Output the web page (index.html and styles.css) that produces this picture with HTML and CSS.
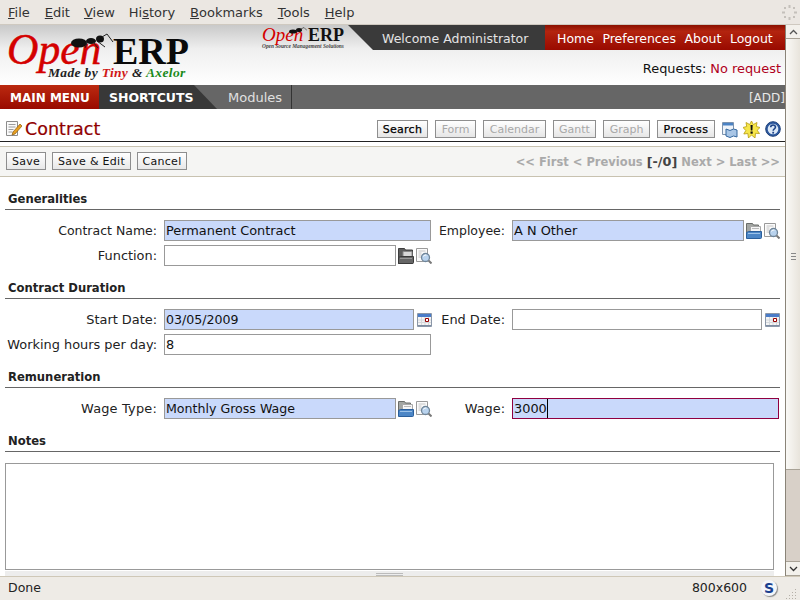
FILE: index.html
```html
<!DOCTYPE html>
<html lang="en">
<head>
<meta charset="utf-8">
<title>Contract - OpenERP</title>
<link rel="stylesheet" href="styles.css">
</head>
<body>
<svg class="defs" width="0" height="0" aria-hidden="true">
  <defs>
    <g id="i-search">
      <path d="M.5 .5h11v13H.5z" fill="#fbfbfb" stroke="#9a9a9a"/>
      <path d="M2.500 3h7M2.500 5h3M2.500 7h3M2.500 9h3" stroke="#c4c4c4"/>
      <circle cx="9.500" cy="9.500" r="4" fill="#b9d3ee" stroke="#6f8599" stroke-width="1.300"/>
      <path d="M7.500 8.500a2.500 2.500 0 0 1 3-1.500" stroke="#fff" fill="none"/>
      <path d="M12.500 12.500l3 3" stroke="#7a7a7a" stroke-width="2"/>
    </g>
    <g id="i-folder">
      <path d="M.5 .5h6l1 1.500h5v8H.5z" fill="#a3a6a3" stroke="#6a6d6a"/>
      <path d="M4.500 3.500h10v6h-10z" fill="#f6f6f6" stroke="#a8a8a8"/>
      <path d="M6 5.500h7" stroke="#bbb"/>
      <path d="M.5 9.500l2-1h13v6a1 1 0 0 1-1 1H.5z" fill="#4c86c6" stroke="#2a5f9c"/>
      <path d="M2 10.500h12" stroke="#9cc2e8"/>
    </g>
    <g id="i-folder-dark">
      <path d="M.5 .5h6l1 1.500h7v13.500H.5z" fill="#5e5e5e" stroke="#3f3f3f"/>
      <path d="M5 3.500h9v5H5z" fill="#d8d8d8" stroke="#888"/>
      <path d="M.5 9.500l2-1h13v6a1 1 0 0 1-1 1H.5z" fill="#666" stroke="#3a3a3a"/>
      <path d="M2 10.500h12" stroke="#999"/>
    </g>
    <g id="i-cal">
      <path d="M.5 1.500h14v13H.5z" fill="#f4f4f4" stroke="#8b97a8"/>
      <path d="M1 2h13v3H1z" fill="#4a7cc8"/>
      <path d="M1 13h13v1H1z" fill="#7f8ea3"/>
      <path d="M4.500 5v8M8 5v8M11.500 5v8M1 8h13M1 10.500h13" stroke="#d5d8dc"/>
      <path d="M8.500 6.500h3v3h-3z" fill="#fff" stroke="#900"/>
    </g>
  </defs>
</svg>
<div class="window">
  <nav class="menubar">
    <span class="m m-file"><u>F</u>ile</span>
    <span class="m m-edit"><u>E</u>dit</span>
    <span class="m m-view"><u>V</u>iew</span>
    <span class="m m-hist">Hi<u>s</u>tory</span>
    <span class="m m-book"><u>B</u>ookmarks</span>
    <span class="m m-tools"><u>T</u>ools</span>
    <span class="m"><u>H</u>elp</span>
    <svg class="spinner" width="15" height="15" viewBox="0 0 15 15">
      <g fill="#c4c0ba">
        <rect x="6.500" y="0" width="2" height="3"/><rect x="6.500" y="12" width="2" height="3"/>
        <rect x="0" y="6.500" width="3" height="2"/><rect x="12" y="6.500" width="3" height="2"/>
        <rect x="2" y="2" width="2" height="2"/><rect x="11" y="2" width="2" height="2"/>
        <rect x="2" y="11" width="2" height="2"/><rect x="11" y="11" width="2" height="2"/>
      </g>
    </svg>
  </nav>
  <div class="viewport">
    <main class="page">
      <header class="header">
        <div class="logo">
          <div class="logo-main">
            <span class="logo-open">Open</span><span class="logo-erp">ERP</span>
            <svg class="ant" width="44" height="18" viewBox="0 0 44 18">
              <ellipse cx="8" cy="10" rx="8" ry="4.500" fill="#111"/>
              <ellipse cx="20" cy="8" rx="5" ry="3" fill="#111"/>
              <ellipse cx="29" cy="6" rx="4" ry="3.500" fill="#111"/>
              <path d="M31 4l5-3 6 8M22 9l5 6M16 10l-2 5M26 8l8 6" fill="none" stroke="#222" stroke-width="1"/>
            </svg>
          </div>
          <div class="logo-by">Made by <span class="c-red">Tiny</span> &amp; <span class="c-green">Axelor</span></div>
        </div>
        <div class="mini-logo">
          <div class="mini-main">
            <span class="mini-open">Open</span><span class="mini-erp">ERP</span>
            <svg class="mini-ant" width="18" height="7" viewBox="0 0 18 7">
              <ellipse cx="4" cy="4.500" rx="4" ry="2" fill="#111"/>
              <ellipse cx="10" cy="3" rx="3" ry="2" fill="#111"/>
              <path d="M12 2l3-1.500 3 3" fill="none" stroke="#222" stroke-width=".6"/>
            </svg>
          </div>
          <div class="mini-sub">Open Source Management Solutions</div>
        </div>
        <div class="head-right">
          <div class="topbar">
            <div class="welcome">Welcome Administrator</div>
            <div class="toplinks"><a>Home</a><a>Preferences</a><a>About</a><a>Logout</a></div>
          </div>
          <div class="requests">Requests: <span class="c-req">No request</span></div>
        </div>
      </header>
      <div class="navbar">
        <div class="nav-main">MAIN MENU</div>
        <div class="nav-short">SHORTCUTS</div>
        <div class="nav-mod">Modules</div>
        <div class="nav-add">[ADD]</div>
      </div>
      <div class="titlebar">
        <svg class="title-icon" width="16" height="17" viewBox="0 0 16 17">
          <path d="M.5 1.500h11v14H.5z" fill="#fafafa" stroke="#8c8c8c"/>
          <path d="M2.500 4.500h7M2.500 7h7M2.500 9.500h5M2.500 12h4" stroke="#9c9c9c"/>
          <path d="M14 4l2 2-7 8-3 1 1-3z" fill="#e8a020" stroke="#8a5a10" stroke-width=".7"/>
        </svg>
        <h1 class="title">Contract</h1>
        <div class="views">
          <span class="vb w-search">Search</span>
          <span class="vb off w-form">Form</span>
          <span class="vb off w-cal">Calendar</span>
          <span class="vb off w-gantt">Gantt</span>
          <span class="vb off w-graph">Graph</span>
          <span class="vb w-proc">Process</span>
        </div>
        <div class="title-tools">
          <svg width="17" height="17" viewBox="0 0 17 17">
            <path d="M1.500 1.500h11v12h-11z" fill="#eef3f9" stroke="#7d93ad"/>
            <path d="M2 2h10v2.500H2z" fill="#4b82c4"/>
            <path d="M5 8l4 1.500 3.500-1.500 3.500 1v7l-3.500-1-3.500 1.500L5 15z" fill="#a9c6e6" stroke="#35689f"/>
          </svg>
          <svg width="17" height="17" viewBox="0 0 17 17">
            <path d="M8.500 0l1.800 3.500L14 1.500l-.7 4 3.700 1-2.800 2.800 2.300 3.200-4-.2-.5 4.700-3.500-3-3 3-.7-4.500-4 .5 2-3.500L0 6.500l3.700-1L3 1.500l3.700 2z" fill="#f6e64a" stroke="#b59a10" stroke-width=".8"/>
            <path d="M7.500 4h2.200l-.3 5.500H7.800z" fill="#111"/>
            <rect x="7.500" y="10.500" width="2.200" height="2.200" fill="#111"/>
          </svg>
          <svg width="16" height="16" viewBox="0 0 16 16">
            <circle cx="8" cy="8" r="7.300" fill="#2d5aa0" stroke="#1d3f78"/>
            <circle cx="8" cy="8" r="5.300" fill="#dce8f6"/>
            <path d="M5.700 6.300c0-3 4.800-3 4.800-.2 0 1.900-2.300 1.700-2.300 3.600" fill="none" stroke="#1d4488" stroke-width="1.600"/>
            <rect x="7.300" y="10.800" width="1.800" height="1.800" fill="#1d4488"/>
          </svg>
        </div>
      </div>
      <div class="actions">
        <div class="act-btns">
          <span class="ab w-save">Save</span>
          <span class="ab w-edit">Save &amp; Edit</span>
          <span class="ab w-cancel">Cancel</span>
        </div>
        <div class="pager">&lt;&lt; First &lt; Previous <b>[-/0]</b> Next &gt; Last &gt;&gt;</div>
      </div>
      <form class="form">
        <h2 class="sec">Generalities</h2>
        <div class="grid">
          <label class="lbl tight">Contract Name:</label>
          <div class="fld req short">Permanent Contract</div>
          <label class="lbl tight">Employee:</label>
          <div class="with-icons">
            <div class="fld req">A N Other</div>
            <svg class="ico" width="16" height="16" viewBox="0 0 16 16"><use href="#i-folder"/></svg>
            <svg class="ico" width="16" height="16" viewBox="0 0 16 16"><use href="#i-search"/></svg>
          </div>
          <label class="lbl">Function:</label>
          <div class="with-icons">
            <div class="fld"></div>
            <svg class="ico" width="16" height="16" viewBox="0 0 16 16"><use href="#i-folder-dark"/></svg>
            <svg class="ico" width="16" height="16" viewBox="0 0 16 16"><use href="#i-search"/></svg>
          </div>
        </div>
        <h2 class="sec">Contract Duration</h2>
        <div class="grid">
          <label class="lbl">Start Date:</label>
          <div class="with-cal">
            <div class="fld req narrow">03/05/2009</div>
            <svg class="ico" width="15" height="16" viewBox="0 0 15 16"><use href="#i-cal"/></svg>
          </div>
          <label class="lbl">End Date:</label>
          <div class="with-cal">
            <div class="fld"></div>
            <svg class="ico" width="15" height="16" viewBox="0 0 15 16"><use href="#i-cal"/></svg>
          </div>
          <label class="lbl">Working hours per day:</label>
          <div class="fld short">8</div>
        </div>
        <h2 class="sec">Remuneration</h2>
        <div class="grid">
          <label class="lbl spaced">Wage Type:</label>
          <div class="with-icons">
            <div class="fld req narrow">Monthly Gross Wage</div>
            <svg class="ico" width="16" height="16" viewBox="0 0 16 16"><use href="#i-folder"/></svg>
            <svg class="ico" width="16" height="16" viewBox="0 0 16 16"><use href="#i-search"/></svg>
          </div>
          <label class="lbl">Wage:</label>
          <div class="fld req focus"><span class="caret">3000</span></div>
        </div>
        <h2 class="sec">Notes</h2>
        <div class="notes"></div>
      </form>
      <div class="resize"><span class="grip"></span></div>
    </main>
    <div class="scrollbar">
      <div class="sb-btn"><svg width="9" height="6" viewBox="0 0 9 6"><path d="M1 5l3.500-3.500L8 5" fill="none" stroke="#555" stroke-width="1.300"/></svg></div>
      <div class="sb-thumb"><span class="sb-grip"></span></div>
      <div class="sb-track"></div>
      <div class="sb-btn"><svg width="9" height="6" viewBox="0 0 9 6"><path d="M1 1l3.500 3.500L8 1" fill="none" stroke="#333" stroke-width="1.300"/></svg></div>
    </div>
  </div>
  <footer class="status">
    <span class="st-done">Done</span>
    <span class="st-size">800x600</span>
    <span class="st-s">S</span>
    <svg class="st-grip" width="12" height="12" viewBox="0 0 12 12">
      <g fill="#b5b0a8">
        <rect x="9" y="1" width="1" height="1"/><rect x="6" y="4" width="1" height="1"/><rect x="9" y="4" width="1" height="1"/>
        <rect x="3" y="7" width="1" height="1"/><rect x="6" y="7" width="1" height="1"/><rect x="9" y="7" width="1" height="1"/>
        <rect x="0" y="10" width="1" height="1"/><rect x="3" y="10" width="1" height="1"/><rect x="6" y="10" width="1" height="1"/><rect x="9" y="10" width="1" height="1"/>
      </g>
    </svg>
  </footer>
</div>
</body>
</html>
```
FILE: styles.css
```css
* { box-sizing: border-box; }
html, body { margin: 0; height: 100%; overflow: hidden; }
body { font-family: "DejaVu Sans", sans-serif; font-size: 13px; color: #111; background: #fff; }
.defs { position: absolute; }
.window { width: 800px; height: 600px; display: flex; flex-direction: column; }

.menubar { height: 25px; flex: none; display: flex; align-items: center; padding: 0 3px 0 8px; background: #ebe7e2; color: #333; font-size: 13px; border-bottom: 1px solid #cfc9c0; }
.m { margin-right: 15px; }
.m-edit { margin-right: 14px; }
.m-view { margin-right: 14px; }
.spinner { margin-left: auto; }

.viewport { flex: 1; min-height: 0; display: flex; }
.page { width: 785px; flex: none; display: flex; flex-direction: column; }

.header { height: 60px; flex: none; display: flex; background: linear-gradient(#c9c9c9, #efefef 40%, #fff); }
.logo { width: 262px; flex: none; padding: 5px 0 0 7px; }
.logo-main { position: relative; display: flex; height: 38px; align-items: baseline; font-family: "Liberation Serif", serif; line-height: 38px; }
.logo-open { font-size: 43.500px; font-style: italic; color: #d40000; width: 106px; -webkit-text-stroke: .5px #d40000; }
.logo-erp { font-size: 38px; font-weight: bold; color: #0a0a0a; }
.ant { position: absolute; left: 64px; top: 3px; }
.logo-by { font-family: "Liberation Serif", serif; font-style: italic; font-weight: bold; font-size: 13.500px; line-height: 14px; padding-left: 41px; color: #222; margin-top: -2px; letter-spacing: .35px; }
.c-red { color: #d01818; }
.c-green { color: #1a8a1a; }
.mini-logo { width: 86px; flex: none; padding-top: 2px; font-family: "Liberation Serif", serif; }
.mini-main { position: relative; line-height: 15px; height: 15px; white-space: nowrap; display: flex; align-items: baseline; }
.mini-open { font-size: 19px; font-style: italic; color: #d40000; width: 46px; }
.mini-erp { font-size: 18px; font-weight: bold; color: #111; }
.mini-ant { position: absolute; left: 27px; top: 0; }
.mini-sub { font-size: 5.400px; line-height: 6px; font-style: italic; font-weight: bold; color: #444; margin-top: 1px; white-space: nowrap; }
.head-right { flex: 1; min-width: 0; display: flex; flex-direction: column; }
.topbar { height: 25px; display: flex; background: #3a3a3a; clip-path: polygon(0 0, 100% 0, 100% 100%, 25px 100%); font-size: 12.500px; }
.welcome { width: 197px; padding-left: 34px; line-height: 27px; color: #e4e4e4; white-space: nowrap; }
.toplinks { flex: 1; display: flex; gap: 8.500px; padding-left: 12px; line-height: 27px; color: #fff; background: linear-gradient(#8a1000, #b3240f 25%, #990a00); white-space: nowrap; }
.requests { margin-top: 10px; text-align: right; padding-right: 4px; line-height: 18px; color: #111; font-size: 12.900px; }
.c-req { color: #b00020; }

.navbar { height: 24px; flex: none; display: flex; background: #666; line-height: 26px; color: #fff; }
.nav-main { width: 99px; padding-left: 10px; font-weight: bold; font-size: 12px; background: linear-gradient(#bb2a10, #990a00); white-space: nowrap; }
.nav-short { width: 118px; padding-left: 10px; font-weight: bold; font-size: 12.500px; background: #383838; clip-path: polygon(0 0, 95px 0, 100% 100%, 0 100%); white-space: nowrap; }
.nav-mod { width: 75px; padding-left: 11px; color: #e0e0e0; border-right: 1px solid #333; }
.nav-add { margin-left: auto; color: #e8e8e8; font-size: 12px; }

.titlebar { height: 33px; flex: none; display: flex; align-items: center; padding: 8px 4px 0 6px; border-bottom: 1px solid #222; }
.title-icon { flex: none; margin-top: -2px; }
.title { margin: 0 0 0 3px; font-size: 17.500px; font-weight: normal; color: #900000; line-height: 24px; -webkit-text-stroke: .2px #900000; }
.views { margin-left: auto; display: flex; gap: 7px; }
.vb { height: 18px; text-align: center; line-height: 17px; font-size: 11px; letter-spacing: .25px; color: #000; border: 1px solid #8e8e8e; background: linear-gradient(#fff, #e6e6e6); -webkit-text-stroke: .25px #000; }
.vb.off { color: #a8a8a8; -webkit-text-stroke: 0; letter-spacing: 0; }
.w-search { width: 51px; }
.w-form { width: 41px; }
.w-cal { width: 63px; }
.w-gantt { width: 43px; }
.w-graph { width: 47px; }
.w-proc { width: 58px; letter-spacing: .45px; }
.title-tools { display: flex; align-items: center; gap: 5px; margin-left: 6px; }

.actions { height: 31px; flex: none; margin-top: 4px; display: flex; align-items: center; justify-content: space-between; padding: 0 5px 0 6px; background: #f5f5f3; border-top: 1px solid #c8c2b0; border-bottom: 1px solid #c8c2b0; }
.act-btns { display: flex; gap: 6px; margin-bottom: 2px; }
.ab { height: 18px; text-align: center; line-height: 17px; font-size: 11px; letter-spacing: .3px; border: 1px solid #8e8e8e; background: linear-gradient(#fff, #e8e8e8); color: #111; white-space: nowrap; }
.w-save { width: 40px; }
.w-edit { width: 79px; }
.w-cancel { width: 50px; }
.pager { font-size: 11.500px; font-weight: bold; color: #aaa; white-space: nowrap; }
.pager b { color: #444; font-size: 12.800px; }

.form { flex: 1; min-height: 0; padding: 0 5px; display: flex; flex-direction: column; }
.sec { margin: 14px 0 10px; padding: 0 3px; height: 19px; flex: none; font-size: 11.600px; font-weight: bold; line-height: 17px; color: #222; border-bottom: 1px solid #666; }
.grid { margin-left: -5px; display: grid; grid-template-columns: 164px 268px 80px 268px; row-gap: 4px; align-items: center; }
.lbl { height: 21px; text-align: right; padding-right: 7px; color: #222; white-space: nowrap; line-height: 22px; font-size: 12.900px; }
.lbl.tight { font-size: 12.500px; }
.lbl.spaced { letter-spacing: .2px; }
.fld { height: 21px; border: 1px solid #999; padding: 0 1px; line-height: 19px; background: #fff; min-width: 0; flex: 1; color: #111; white-space: nowrap; font-size: 12.900px; }
.fld.narrow { font-size: 12.600px; }
.fld.short { width: 267px; }
.fld.req { background: #c9d9fb; }
.fld.focus { border-color: #900040; width: 267px; flex: none; }
.caret { border-right: 1px solid #000; display: inline-block; height: 19px; }
.with-icons { display: flex; align-items: center; gap: 2px; }
.with-cal { display: flex; align-items: center; gap: 3px; }
.ico { flex: none; }
.notes { height: 107px; width: 769px; border: 1px solid #999; background: #fff; flex: none; margin-top: 1px; }

.resize { height: 5px; flex: none; margin: auto 11px 0 5px; background: #ededed; display: flex; justify-content: center; }
.grip { width: 27px; height: 3px; margin-top: 2px; border-top: 1px solid #bbb; border-bottom: 1px solid #bbb; }

.scrollbar { width: 15px; flex: none; display: flex; flex-direction: column; background: #d8d0c8; border-left: 1px solid #8a8478; }
.sb-btn { height: 14px; flex: none; display: flex; align-items: center; justify-content: center; background: #f3f1ec; border-bottom: 1px solid #a8a296; }
.sb-btn:last-child { border-top: 1px solid #a8a296; border-bottom: 1px solid #a8a296; height: 15px; }
.sb-thumb { height: 431px; flex: none; display: flex; align-items: flex-start; justify-content: center; padding-top: 214px; background: linear-gradient(90deg, #faf9f6, #e8e4dc); border-bottom: 1px solid #a8a296; }
.sb-grip { width: 5px; height: 7px; border-top: 1px solid #888; border-bottom: 1px solid #888; background: linear-gradient(transparent 2px, #888 2px, #888 3px, transparent 3px); }
.sb-track { flex: 1; }

.status { height: 24px; flex: none; display: flex; align-items: center; padding: 0 0 0 8px; background: #eeebe6; border-top: 1px solid #cfc8b8; color: #222; font-size: 12.500px; }
.st-done { margin-top: -3px; }
.st-size { margin-left: auto; margin-top: -3px; }
.st-s { width: 16px; height: 16px; margin: -2px 0 0 14px; border-radius: 50%; background: #f4f6fa; box-shadow: 1px 1px 1px #888; color: #1a3f8f; font-weight: bold; font-size: 14px; line-height: 16px; text-align: center; }
.st-grip { margin: 10px 2px 0 9px; }
```
